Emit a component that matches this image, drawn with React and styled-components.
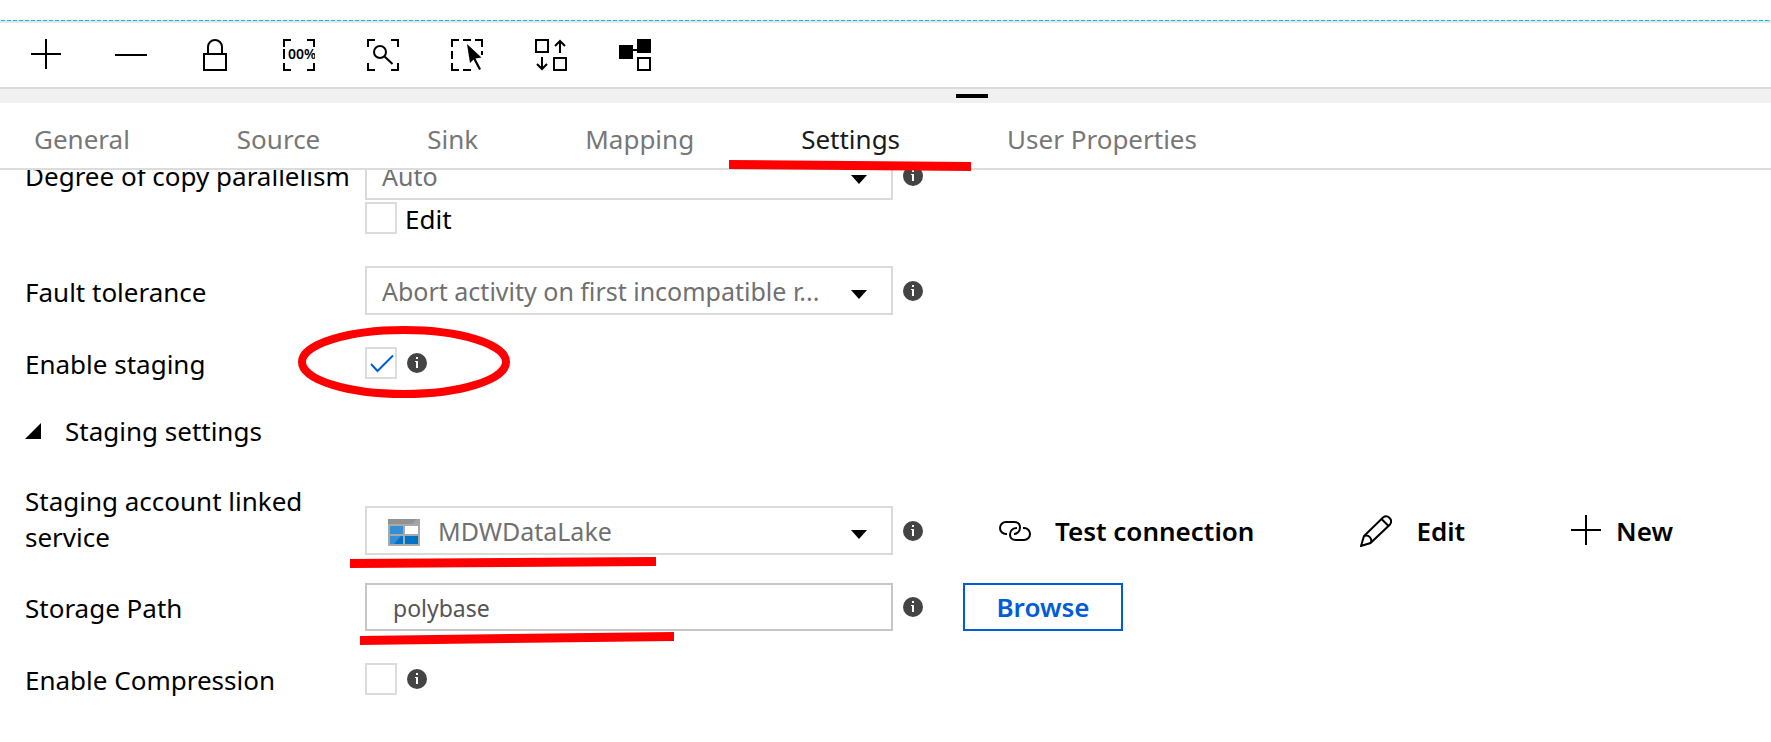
import React, { useId, useState } from "react";
import styled, { createGlobalStyle } from "styled-components";

const GlobalStyle = createGlobalStyle`
  *, *::before, *::after { box-sizing: border-box; }
  body {
    margin: 0;
    background: #fff;
    color: #000;
    font-family: "Segoe UI", "Noto Sans", "Open Sans", sans-serif;
    font-size: 26px;
    line-height: 32px;
  }
  button, input, select { font: inherit; color: inherit; margin: 0; }
`;

const Page = styled.div`
  display: flex;
  flex-direction: column;
  min-height: 100vh;
  overflow: hidden;
`;

const CanvasEdge = styled.div`
  padding-top: 20px;
  border-bottom: 2px solid #e6e6e6;

  &::after {
    content: "";
    display: block;
    height: 1px;
    background: repeating-linear-gradient(90deg, #c4e6f2 0 1px, #00bcf2 1px 5px, #c4e6f2 5px 6px);
  }
`;

const Toolbar = styled.div`
  display: flex;
  align-items: center;
  gap: 52px;
  height: 64px;
  padding: 0 31px;
`;

const IconButton = styled.button`
  display: flex;
  padding: 0;
  border: 0;
  background: none;
  cursor: pointer;
`;

const Splitter = styled.div`
  height: 16px;
  padding-top: 5px;
  border-top: 2px solid #dcdcdc;
  background: #f1f1f1;
`;

const SplitterGrip = styled.div`
  width: 32px;
  height: 4px;
  margin-left: 54%;
  background: #000;
`;

const Tabs = styled.nav`
  display: flex;
  gap: 107px;
  height: 67px;
  padding: 18px 34px 0;
  border-bottom: 2px solid #dcdcdc;
`;

const Tab = styled.button`
  position: relative;
  height: 36px;
  padding: 0;
  border: 0;
  background: none;
  white-space: nowrap;
  color: ${(p) => (p.$active ? "#1a1a1a" : "#777")};
  cursor: pointer;
`;

const Panel = styled.main`
  flex: 1;
  overflow: hidden;
`;

const PanelContent = styled.div`
  margin-top: -19px;
  padding: 0 25px 32px;
`;

const Row = styled.div`
  display: grid;
  grid-template-columns: 340px minmax(0, 1fr);
  align-items: ${(p) => (p.$align ? p.$align : "center")};
  margin-bottom: ${(p) => (p.$tight ? "28px" : "32px")};
`;

const Label = styled.label`
  padding-top: ${(p) => (p.$multiline ? "0" : "2px")};
  line-height: ${(p) => (p.$multiline ? "36px" : "30px")};
  white-space: ${(p) => (p.$multiline ? "normal" : "nowrap")};
  padding-right: ${(p) => (p.$multiline ? "48px" : "0")};
  margin-top: ${(p) => (p.$beside ? "8px" : "0")};
`;

const Field = styled.div`
  position: relative;
  display: flex;
  align-items: center;
`;

const SelectBox = styled.div`
  display: grid;
  flex: 0 1 528px;
  align-items: center;
  margin-right: 10px;

  > * { grid-area: 1 / 1; }
  > svg { pointer-events: none; }
`;

const Select = styled.select`
  appearance: none;
  width: 100%;
  height: 49px;
  padding: 0 60px 0 ${(p) => (p.$withIcon ? "71px" : "15px")};
  border: 2px solid #dadada;
  border-radius: 0;
  background: #fff;
  color: #707070;
  font-size: 25px;
`;

const Caret = styled.svg`
  justify-self: end;
  margin: 8px 25px 0 0;
`;

const StoreIcon = styled.svg`
  margin: 4px 0 0 23px;
`;

const TextInput = styled.input`
  flex: 0 1 528px;
  min-width: 0;
  height: 48px;
  margin-right: 10px;
  padding: 2px 26px 0;
  border: 2px solid #c6c6c6;
  color: #555;
  font-size: 23px;
`;

const CheckLine = styled.div`
  display: flex;
  align-items: center;
  gap: ${(p) => (p.$gap ? p.$gap : "10px")};
  margin-top: ${(p) => (p.$under ? "2px" : "0")};
`;

const CheckBox = styled.span`
  display: grid;
  width: 32px;
  height: 32px;

  > * { grid-area: 1 / 1; }
  > svg { pointer-events: none; }
`;

const CheckInput = styled.input`
  appearance: none;
  width: 32px;
  height: 32px;
  border: 2px solid #dcdcdc;
  background: #fff;
`;

const SectionToggle = styled.button`
  display: flex;
  align-items: center;
  gap: 24px;
  height: 40px;
  margin: 0 0 32px;
  padding: 0;
  border: 0;
  background: none;
  cursor: pointer;
`;

const Actions = styled.div`
  display: flex;
  gap: 106px;
  margin-left: 76px;
`;

const ActionButton = styled(IconButton)`
  align-items: center;
  gap: ${(p) => (p.$close ? "13px" : "24px")};
  font-weight: 600;
  white-space: nowrap;
`;

const BrowseButton = styled.button`
  flex: none;
  width: 160px;
  height: 48px;
  margin-left: 40px;
  padding: 0;
  border: 2px solid #015cda;
  background: #fff;
  color: #015cda;
  font-weight: 600;
  cursor: pointer;
`;

const Mark = styled.svg`
  position: absolute;
  left: ${(p) => p.$left};
  top: ${(p) => p.$top};
  overflow: visible;
  pointer-events: none;
  z-index: 1;
`;

function Icon({ children, ...rest }) {
  return (
    <svg width="32" height="32" viewBox="0 0 32 32" fill="none" stroke="#000" strokeWidth="2" aria-hidden="true" {...rest}>
      {children}
    </svg>
  );
}

const CORNERS = "M1 8V1H8M24 1H31V8M31 24V31H24M8 31H1V24";

const PlusIcon = () => (
  <Icon><path d="M0 15H30M15 0V30" /></Icon>
);
const MinusIcon = () => (
  <Icon><path d="M0 16H32" /></Icon>
);
const LockIcon = () => (
  <Icon><path d="M5 15H27V31H5ZM9 15V8a7 7 0 0 1 14 0V15" /></Icon>
);
const ActualSizeIcon = () => (
  <Icon>
    <path d={CORNERS} />
    <path d="M1 10V20" />
    <text x="5" y="20" fontSize="14" fontWeight="600" fill="#000" stroke="none">00%</text>
  </Icon>
);
const ZoomFitIcon = () => (
  <Icon>
    <path d={CORNERS} />
    <circle cx="13" cy="13" r="6" />
    <path d="M17 17L25.500 25" />
  </Icon>
);
const MarqueeIcon = () => (
  <Icon>
    <path d="M1 8V1H8M12 1H20M24 1H31V8M31 12V16M1 12V20M1 24V31H8M12 31H20" />
    <path d="M16 5L30.500 18.500 24.500 19.500 30 30 28 31 22.500 20.500 19 24Z" fill="#000" stroke="none" />
  </Icon>
);
const ArrangeIcon = () => (
  <Icon>
    <path d="M1 1H13V13H1ZM19 19H31V31H19ZM25 14V2M20 7L25 2 30 7M7 18V30M2 25L7 30 12 25" />
  </Icon>
);
const NodesIcon = () => (
  <Icon>
    <path d="M1 7H13V19H1ZM19 1H31V13H19Z" fill="#000" />
    <path d="M13 11H19M19 19H31V31H19Z" />
  </Icon>
);
const LinkIcon = () => (
  <Icon height="20" viewBox="0 0 32 20">
    <path d="M8 13H7a6 6 0 0 1 0-12h8c4 0 6 2.500 6 5.500 0 4-3 6.500-6 6.500M18 7c-4 0-7 2.500-7 6.500 0 3 2 5.500 6 5.500h8a6 6 0 0 0 0-12h-1" />
  </Icon>
);
const PencilIcon = () => (
  <Icon>
    <path d="M1 31L4 21 23 2.500a5 5 0 0 1 7 7L10.500 28ZM4 21a5 5 0 0 1 6.500 7M21.500 4L28.500 11M1.500 29.500L3 31" />
  </Icon>
);

const InfoIcon = () => (
  <svg width="20" height="20" viewBox="0 0 20 20" role="img" aria-label="Info">
    <circle cx="10" cy="10" r="10" fill="#444" />
    <rect x="9" y="4" width="2" height="2" fill="#fff" />
    <path d="M8 8H11V15H9V9H8Z" fill="#fff" />
  </svg>
);

const DropCaret = () => (
  <Caret width="18" height="9" viewBox="0 0 18 9" aria-hidden="true">
    <path d="M1 0H17L9 9Z" />
  </Caret>
);

const StorageIcon = () => (
  <StoreIcon width="32" height="27" viewBox="0 0 32 27" aria-hidden="true">
    <rect width="32" height="27" rx="1" fill="#a9a9a9" />
    <path d="M0 5V1Q0 0 1 0H31Q32 0 32 1V5Z" fill="#929292" />
    <path d="M29 0H31Q32 0 32 1V5H24Z" fill="#a3a3a3" />
    <path d="M2 7H15V15H2Z" fill="#358fd5" />
    <path d="M17 7H30V15H17Z" fill="#fff" />
    <path d="M2 17H15V25H2ZM17 17H30V25H17Z" fill="#0072c8" />
    <path d="M2 17H13L6 25H2Z" fill="#358fd5" />
  </StoreIcon>
);

function DropDown({ id, value, icon }) {
  return (
    <SelectBox>
      <Select id={id} $withIcon={Boolean(icon)} defaultValue={value}>
        <option value={value}>{value}</option>
      </Select>
      {icon}
      <DropCaret />
    </SelectBox>
  );
}

function Check({ id, initial = false }) {
  const [on, setOn] = useState(initial);
  return (
    <CheckBox>
      <CheckInput id={id} type="checkbox" checked={on} onChange={(e) => setOn(e.target.checked)} />
      {on && (
        <Icon stroke="#015cda"><path d="M6 17L12.500 24 28 8.500" /></Icon>
      )}
    </CheckBox>
  );
}

const TOOLS = [
  ["Zoom in", PlusIcon],
  ["Zoom out", MinusIcon],
  ["Lock canvas", LockIcon],
  ["Zoom to 100%", ActualSizeIcon],
  ["Zoom to fit", ZoomFitIcon],
  ["Select", MarqueeIcon],
  ["Auto align", ArrangeIcon],
  ["Show lineage", NodesIcon],
];

const TAB_NAMES = ["General", "Source", "Sink", "Mapping", "Settings", "User Properties"];

export default function App() {
  const id = useId();
  return (
    <Page>
      <GlobalStyle />
      <CanvasEdge />
      <Toolbar role="toolbar" aria-label="Canvas">
        {TOOLS.map(([name, Glyph]) => (
          <IconButton key={name} type="button" aria-label={name}><Glyph /></IconButton>
        ))}
      </Toolbar>
      <Splitter><SplitterGrip /></Splitter>
      <Tabs>
        {TAB_NAMES.map((name) => (
          <Tab key={name} type="button" $active={name === "Settings"}>
            {name}
            {name === "Settings" && (
              <Mark $left="-72px" $top="39px" width="242" height="11" viewBox="0 0 242 11">
                <path d="M0 0L242 2V11L0 9Z" fill="#f00" />
              </Mark>
            )}
          </Tab>
        ))}
      </Tabs>
      <Panel>
        <PanelContent>
          <Row $align="start">
            <Label htmlFor={id + "parallel"} $beside>Degree of copy parallelism</Label>
            <div>
              <Field>
                <DropDown id={id + "parallel"} value="Auto" />
                <InfoIcon />
              </Field>
              <CheckLine $under $gap="8px">
                <Check id={id + "edit"} />
                <Label htmlFor={id + "edit"}>Edit</Label>
              </CheckLine>
            </div>
          </Row>
          <Row>
            <Label htmlFor={id + "fault"}>Fault tolerance</Label>
            <Field>
              <DropDown id={id + "fault"} value="Abort activity on first incompatible r..." />
              <InfoIcon />
            </Field>
          </Row>
          <Row>
            <Label htmlFor={id + "staging"}>Enable staging</Label>
            <Field>
              <CheckLine>
                <Check id={id + "staging"} initial />
                <InfoIcon />
              </CheckLine>
              <Mark $left="-67px" $top="-21px" width="212" height="72" viewBox="0 0 212 72">
                <ellipse cx="106" cy="36" rx="102" ry="32" fill="none" stroke="#f00" strokeWidth="8" />
              </Mark>
            </Field>
          </Row>
          <SectionToggle type="button" aria-expanded="true">
            <svg width="16" height="16" viewBox="0 0 16 16" aria-hidden="true"><path d="M16 0V16H0Z" /></svg>
            Staging settings
          </SectionToggle>
          <Row $tight $align="end">
            <Label htmlFor={id + "account"} $multiline>Staging account linked service</Label>
            <Field>
              <DropDown id={id + "account"} value="MDWDataLake" icon={<StorageIcon />} />
              <InfoIcon />
              <Actions>
                <ActionButton type="button"><LinkIcon />Test connection</ActionButton>
                <ActionButton type="button"><PencilIcon />Edit</ActionButton>
                <ActionButton type="button" $close><PlusIcon />New</ActionButton>
              </Actions>
              <Mark $left="-15px" $top="51px" width="306" height="11" viewBox="0 0 306 11">
                <path d="M0 2L306 0V9L0 11Z" fill="#f00" />
              </Mark>
            </Field>
          </Row>
          <Row>
            <Label htmlFor={id + "path"}>Storage Path</Label>
            <Field>
              <TextInput id={id + "path"} type="text" defaultValue="polybase" />
              <InfoIcon />
              <BrowseButton type="button">Browse</BrowseButton>
              <Mark $left="-5px" $top="49px" width="314" height="13" viewBox="0 0 314 13">
                <path d="M0 4L314 0V9L0 13Z" fill="#f00" />
              </Mark>
            </Field>
          </Row>
          <Row>
            <Label htmlFor={id + "compress"}>Enable Compression</Label>
            <CheckLine>
              <Check id={id + "compress"} />
              <InfoIcon />
            </CheckLine>
          </Row>
        </PanelContent>
      </Panel>
    </Page>
  );
}
